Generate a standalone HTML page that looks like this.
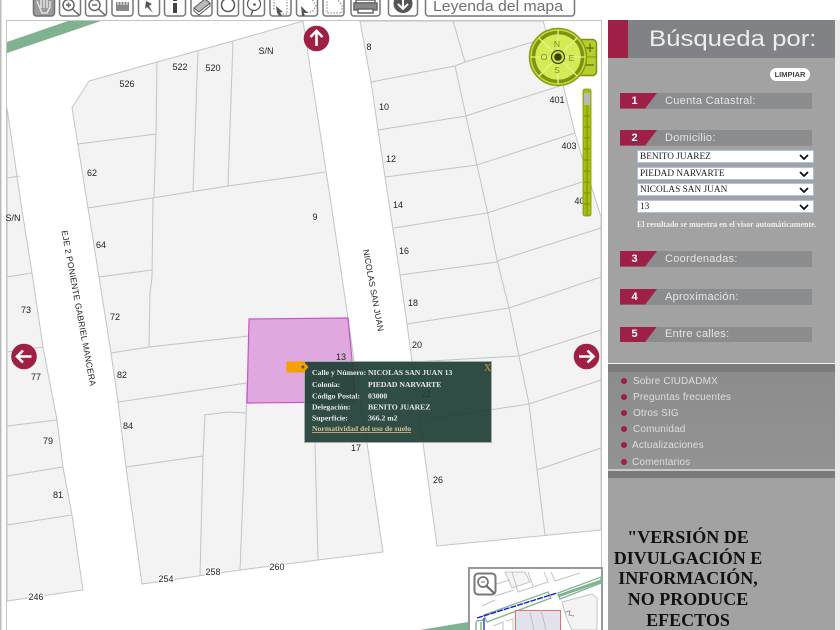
<!DOCTYPE html>
<html lang="es"><head><meta charset="utf-8"><title>Búsqueda por</title>
<style>
html,body{margin:0;padding:0;background:#fff;width:840px;height:630px;overflow:hidden}
#root{position:relative;width:840px;height:630px;overflow:hidden;filter:blur(.3px)}
svg{position:absolute;left:0;top:0}
.l{font:9px "Liberation Sans",sans-serif;fill:#222;text-anchor:middle}
.h{paint-order:stroke;stroke:#fff;stroke-width:2px}
.p{fill:#f3f3f3;stroke:#c4c4c4;stroke-width:1}
.n{fill:none;stroke:#c4c4c4;stroke-width:1}
.pop{font:bold 7.7px "Liberation Serif",serif;fill:#e8e8e8}
.abs{position:absolute}
.bar{position:absolute;left:620px;width:192px;height:15.5px;background:#8a8c8e}
.bar i{position:absolute;left:0;top:0;width:37px;height:100%;background:#9e2047;clip-path:polygon(0 0,100% 0,68% 100%,0 100%)}
.bar b{position:absolute;left:2px;width:25px;top:1.5px;text-align:center;font:bold 11px "Liberation Sans",sans-serif;color:#fff}
.bar span{position:absolute;left:45px;top:1.5px;font:11px "Liberation Sans",sans-serif;letter-spacing:.3px;color:#e6e6e6;white-space:nowrap}
.sel{position:absolute;left:637px;height:11px;background:#fff;border:1px solid #a9c3e6;font:9.3px/12px "Liberation Serif",serif;color:#222;padding-left:2px;box-sizing:content-box;width:173px;white-space:nowrap}
.sel svg{left:161px;top:1.5px}
.lnk{position:absolute;left:633px;font:10px "Liberation Sans",sans-serif;letter-spacing:.15px;color:#dedede;white-space:nowrap}
.dot{position:absolute;left:621px;width:6px;height:6px;border-radius:3px;background:#9e2047}
.ver{position:absolute;left:608px;width:160px;text-align:center;font:bold 18px/20.7px "Liberation Serif",serif;color:#111;top:527px;white-space:nowrap}
.t{fill:#fff;stroke:#777;stroke-width:1.5}
</style></head>
<body><div id="root">
<svg width="840" height="630" viewBox="0 0 840 630">
<rect x="0" y="0" width="1.5" height="630" fill="#bbb"/>
<!-- map -->
<rect x="6.5" y="20.5" width="595" height="610" fill="#fff" stroke="#c4c4c4"/>
<polygon points="7,42 68,21 101,21 7,53" fill="#7fb38f"/>
<polygon points="420,630 468,622 468,630" fill="#7fb38f"/>
<!-- west block -->
<polygon class="p" points="7,108 22,210 32,273 43,347 57,420 63,467 72,515 83,590 7,601"/>
<path class="n" d="M7,178 20,176M7,277 32,273M7,352 43,347M7,426 57,420M7,476 63,467M7,525 72,515"/>
<!-- central block -->
<polygon class="p" points="72,108 89,81 157,62 233,41 303,21 332,210 348,318 354,360 367,443 383,552 318,560 240,570 142,584 126,467 118,402 111,353 99,277 88,208"/>
<path class="n" d="M78,144 156,134M157,62 156,134 154,198M198,51 193,192M233,41 228,186M88,208 152,198 228,186 300,176 325,172M153,198 152,278 150,292 149,347M99,277 152,270M111,353 149,347 249,336M118,402 247,383M126,467 203,456M205,415 203,456 200,575M204,415 228,412 246,413M247,383 246,420 240,570M315,400 315,443 318,560"/>
<!-- east block -->
<polygon class="p" points="360,21 371,82 385,177 390,210 400,275 407,324 412,361 423,443 437,546 601,530 601,217 582,157 575,133 563,85 543,21"/>
<path class="n" d="M453,21 465,62M455,66 466,116 477,165 487,210 497,260 509,308 519,356 529,404 537,470 545,535M371,82 455,66 465,62 533,42M378,130 466,116 490,108 560,86M385,177 477,165 575,133M487,213 582,182M394,228 487,213M497,261 601,228M400,275 497,262M509,308 601,277M407,324 509,308M519,356 601,330M412,362 519,356M529,404 601,380M423,420 529,404M537,470 601,448"/>
<!-- pink parcel -->
<polygon points="249,319 348,318 356,402 247,403" fill="#dfa8de" stroke="#c855c8" stroke-width="1.2"/>
<!-- labels -->
<g>
<text class="l" x="127" y="87">526</text><text class="l" x="180" y="70">522</text><text class="l" x="213" y="71">520</text><text class="l" x="266" y="54">S/N</text>
<text class="l" x="369" y="50">8</text><text class="l" x="384" y="110">10</text><text class="l" x="391" y="162">12</text><text class="l" x="398" y="208">14</text><text class="l" x="404" y="254">16</text><text class="l" x="413" y="306">18</text><text class="l" x="417" y="348">20</text>
<text class="l" x="557" y="103">401</text><text class="l" x="569" y="149">403</text><text class="l" x="582" y="204">403</text>
<text class="l" x="92" y="176">62</text><text class="l" x="101" y="248">64</text><text class="l" x="315" y="220">9</text><text class="l" x="13" y="221">S/N</text>
<text class="l" x="115" y="320">72</text><text class="l" x="26" y="313">73</text><text class="l" x="36" y="380">77</text><text class="l" x="122" y="378">82</text><text class="l" x="128" y="429">84</text>
<text class="l" x="48" y="444">79</text><text class="l" x="58" y="498">81</text>
<text class="l h" x="36" y="600">246</text><text class="l h" x="166" y="582">254</text><text class="l h" x="213" y="575">258</text><text class="l h" x="277" y="570">260</text>
<text class="l" x="341" y="360">13</text><text class="l" x="356" y="451">17</text><text class="l" x="438" y="483">26</text><text class="l" x="426" y="397">22</text>
<text font-family="Liberation Sans" font-size="8.5" fill="#222" transform="translate(61.5,231) rotate(79.5)" textLength="158">EJE 2 PONIENTE GABRIEL MANCERA</text>
<text font-family="Liberation Sans" font-size="8.5" fill="#222" transform="translate(363,250) rotate(79.6)" textLength="83">NICOLAS SAN JUAN</text>
</g>
<!-- arrows -->
<g fill="#a01f45"><circle cx="316.500" cy="38.500" r="12.800"/><circle cx="24" cy="356.500" r="12.800"/><circle cx="586.500" cy="356.500" r="12.800"/></g>
<g fill="none" stroke="#fff" stroke-width="2.600">
<path d="M316.500,46V31M310.500,37 316.500,31 322.500,37"/>
<path d="M31.500,356.500H17M23,350.500 17,356.500 23,362.500"/>
<path d="M579,356.500H593.500M587.500,350.500 593.500,356.500 587.500,362.500"/>
</g>
<!-- compass -->
<rect x="576" y="39.500" width="20.500" height="36" rx="4" fill="#b7ce2c" stroke="#7f9110" stroke-width="1.500"/>
<path d="M578,57H596" stroke="#7f9110"/>
<path d="M590,43.500V52M586,48H594M586,65H594" stroke="#5e6e08" stroke-width="1.300"/>
<circle cx="558" cy="57" r="28.500" fill="#c3da34" stroke="#8a9c14" stroke-width="1.500"/>
<circle cx="558" cy="57" r="24.500" fill="none" stroke="#7f9110" stroke-width="3.500"/>
<circle cx="558" cy="57" r="22.500" fill="#d6ea55"/>
<path d="M558,30V84M531,57H585M539,38 577,76M577,38 539,76" stroke="#e6f28e" stroke-width="1.300"/>
<circle cx="558" cy="57" r="6.500" fill="#cfe24b" stroke="#3d4706" stroke-width="1.200"/>
<circle cx="558" cy="57" r="3.800" fill="#39420a"/>
<g font-family="Liberation Sans" font-size="8.500" fill="#7b8c14" text-anchor="middle"><text x="557" y="47">N</text><text x="544" y="60">O</text><text x="571.500" y="61">E</text><text x="557" y="73">S</text></g>
<!-- slider -->
<rect x="583" y="89" width="8" height="127" rx="2" fill="#a9bf10" stroke="#7f9110" stroke-width=".8"/>
<rect x="584" y="93" width="6" height="12" fill="#b8b8b8"/>
<path d="M587,105V216M584,116H590M584,127H590M584,138H590M584,149H590M584,160H590M584,171H590M584,182H590M584,193H590M584,204H590" stroke="#718206" stroke-width=".8"/>
<!-- toolbar -->
<g>
<rect x="33.500" y="-6" width="21" height="22" rx="3" fill="#9a9a9a" stroke="#6f6f6f" stroke-width="1.500"/>
<rect class="t" x="59.500" y="-6" width="21" height="22" rx="3"/><rect class="t" x="85.500" y="-6" width="21" height="22" rx="3"/><rect class="t" x="112" y="-6" width="21" height="22" rx="3"/><rect class="t" x="138.500" y="-6" width="21" height="22" rx="3"/><rect class="t" x="164.500" y="-6" width="21" height="22" rx="3"/><rect class="t" x="191" y="-6" width="21" height="22" rx="3"/><rect class="t" x="217.500" y="-6" width="21" height="22" rx="3"/><rect class="t" x="243.500" y="-6" width="21" height="22" rx="3"/><rect class="t" x="270" y="-6" width="21" height="22" rx="3"/><rect class="t" x="296.500" y="-6" width="21" height="22" rx="3"/><rect class="t" x="323" y="-6" width="21" height="22" rx="3"/><rect class="t" x="351" y="-6" width="29" height="22" rx="3"/><rect class="t" x="388.500" y="-6" width="29" height="22" rx="3"/><rect class="t" x="425.500" y="-6" width="149" height="22" rx="3"/>
<!-- hand -->
<path d="M39,6 37,1M41,8V-1M44,8V-2M47,8V-1M39,6 42,13H47L50,7V1" fill="none" stroke="#e4e4e4" stroke-width="1.500"/>
<g fill="none" stroke="#666" stroke-width="1.500">
<circle cx="68.500" cy="5" r="5.500"/><path d="M72.500,9 79,15M66,5H71M68.500,2.500V7.500"/>
<circle cx="94.500" cy="5" r="5.500"/><path d="M98.500,9 105,15M92,5H97"/>
</g>
<path d="M116,2H129V11H116Z" fill="#888"/><path d="M118,0V5M121,0V5M124,0V5M127,0V5" stroke="#fff"/>
<path d="M146,1 152,4 149,6 153,13 147,7 145,9Z" fill="#555"/>
<rect x="173" y="-2" width="4" height="3" fill="#444"/><rect x="173" y="3" width="4" height="10" fill="#444"/>
<path d="M194,8 205,-1 210,3 199,12Z" fill="#bbb" stroke="#555"/><path d="M194,8V11L199,15 210,6V3" fill="none" stroke="#555"/>
<circle cx="228" cy="5" r="6.500" fill="none" stroke="#555" stroke-width="1.500"/>
<circle cx="254" cy="4" r="6.500" fill="none" stroke="#555" stroke-width="1.200"/><circle cx="254.500" cy="4.500" r="1.300" fill="#555"/><path d="M253,10 251,15" stroke="#555" stroke-width="1.500"/>
<path d="M274,-1V11M287,-1V14H280" fill="none" stroke="#777" stroke-dasharray="1.500 1.500"/><path d="M276,6 283,12 280,12.500 282,15.500 279,15.500 277,13Z" fill="#555"/>
<path d="M301,-1H312L316,6 312,12H306" fill="none" stroke="#777" stroke-dasharray="1.500 1.500"/><path d="M301,6 308,13 304,13 305,16 302,16Z" fill="#555"/>
<path d="M327,-1H337L342,5V13H327Z" fill="none" stroke="#777" stroke-dasharray="1.500 1.500"/>
<g fill="none" stroke="#666" stroke-width="1.500"><rect x="356" y="0" width="19" height="3"/><rect x="354" y="3" width="23" height="7" fill="#888"/><rect x="358" y="9" width="15" height="4" fill="#fff"/></g>
<circle cx="403" cy="3.500" r="9.500" fill="#555"/><path d="M403,-2V9M398,4 403,9 408,4" fill="none" stroke="#fff" stroke-width="2"/>
<text x="433" y="11" font-family="Liberation Sans" font-size="15" fill="#6f6f6f" textLength="130" lengthAdjust="spacingAndGlyphs">Leyenda del mapa</text>
</g>
<!-- minimap -->
<rect x="469" y="568" width="133" height="63" fill="#fff" stroke="#999" stroke-width="2"/>
<g fill="none">
<path d="M505,572 512,588 530,582 525,572Z" stroke="#c4c4c4" fill="#f4f4f4"/>
<path d="M512,572 518,592 548,582 544,572" stroke="#c4c4c4"/>
<path d="M528,572 533,586M551,572 555,581 580,573M493,585 510,580M495,596 514,590M482,606 495,600" stroke="#c4c4c4"/>
<path d="M562,602 592,594 597,598V630H572Q566,618 562,602Z" fill="#f4f4f4" stroke="#c4c4c4"/>
<path d="M565,612 570,611 569,615 574,616" stroke="#999"/>
<path d="M484,615 548,592 551,598 487,622ZM558,593 601,577V583L560,599Z" fill="#fff" stroke="#83b593" stroke-width="1.300"/>
<path d="M558,596 601,581" stroke="#7fb38f" stroke-width="3"/>
<path d="M476,621 484,620M476,630V622M481,630V622" stroke="#83b593" stroke-width="1.500"/>
<path d="M477,618 557,593" stroke="#1b1bd0" stroke-width="1.400" stroke-dasharray="6 1"/>
<path d="M484,618V630" stroke="#3a3ae0" stroke-width="1.500"/>
<path d="M493,626 503,622V630M506,621 513,619V630" stroke="#c4c4c4"/>
<rect x="515.500" y="610.500" width="45" height="24" fill="#e2e2ec" stroke="#f06a6a"/>
<path d="M530,612 534,630M541,610 546,630" stroke="#c0c0c0"/>
<rect x="474.500" y="573.500" width="21" height="21" rx="3.500" fill="#fff" stroke="#777" stroke-width="2"/>
<circle cx="483" cy="582" r="5" stroke="#666" stroke-width="1.500"/><path d="M486.500,586 494,593" stroke="#666" stroke-width="2"/><path d="M481,582H485" stroke="#666"/>
</g>
<!-- popup -->
<rect x="304.500" y="361.500" width="187" height="81" fill="#1f3f37" fill-opacity=".93" stroke="#a8a8a8"/>
<g class="pop">
<text class="pop" x="312" y="375">Calle y Número:</text><text class="pop" x="368" y="375">NICOLAS SAN JUAN 13</text>
<text class="pop" x="312" y="387">Colonia:</text><text class="pop" x="368" y="387">PIEDAD NARVARTE</text>
<text class="pop" x="312" y="398.500">Código Postal:</text><text class="pop" x="368" y="398.500">03000</text>
<text class="pop" x="312" y="409.500">Delegación:</text><text class="pop" x="368" y="409.500">BENITO JUAREZ</text>
<text class="pop" x="312" y="420.500">Superficie:</text><text class="pop" x="368" y="420.500">366.2 m2</text>
<text class="pop" x="312" y="431" style="fill:#dcc08a;text-decoration:underline">Normatividad del uso de suelo</text>
<text x="484" y="371" font-family="Liberation Serif" font-size="10" font-weight="bold" fill="#b08a3e">X</text>
</g>
<path d="M286.500,361.500H303.500L308.500,367 303.500,372.500H286.500Z" fill="#f5a000"/>
<circle cx="303" cy="367" r="1.500" fill="#4a5a70"/>
</svg>

<!-- panel -->
<div class="abs" style="left:835px;top:20px;width:5px;height:610px;background:#ececec"></div>
<div class="abs" style="left:608px;top:20px;width:227px;height:610px;background:#a2a2a2"></div>
<div class="abs" style="left:608px;top:20px;width:227px;height:38px;background:#808285"></div>
<div class="abs" style="left:608px;top:20px;width:20px;height:38px;background:#9e2047"></div>
<div class="abs" style="left:649px;top:25px;font:22px/28px 'Liberation Sans',sans-serif;color:#eee;white-space:nowrap;transform:scaleX(1.17);transform-origin:0 0">Búsqueda por:</div>
<div class="abs" style="left:770px;top:68px;width:40px;height:13px;border-radius:7px;background:#fff;text-align:center;font:bold 7.500px/13px 'Liberation Sans',sans-serif;color:#444">LIMPIAR</div>

<div class="bar" style="top:93px"><i></i><b>1</b><span>Cuenta Catastral:</span></div>
<div class="bar" style="top:130px"><i></i><b>2</b><span>Domicilio:</span></div>
<div class="sel" style="top:150px">BENITO JUAREZ<svg width="10" height="8"><path d="M1,2 5,6 9,2" fill="none" stroke="#111" stroke-width="1.800"/></svg></div>
<div class="sel" style="top:167px">PIEDAD NARVARTE<svg width="10" height="8"><path d="M1,2 5,6 9,2" fill="none" stroke="#111" stroke-width="1.800"/></svg></div>
<div class="sel" style="top:183px">NICOLAS SAN JUAN<svg width="10" height="8"><path d="M1,2 5,6 9,2" fill="none" stroke="#111" stroke-width="1.800"/></svg></div>
<div class="sel" style="top:200px">13<svg width="10" height="8"><path d="M1,2 5,6 9,2" fill="none" stroke="#111" stroke-width="1.800"/></svg></div>
<div class="abs" style="left:637px;top:220px;font:bold 8px/10px 'Liberation Serif',serif;color:#eee;white-space:nowrap">El resultado se muestra en el visor automáticamente.</div>
<div class="bar" style="top:251px"><i></i><b>3</b><span>Coordenadas:</span></div>
<div class="bar" style="top:289px"><i></i><b>4</b><span>Aproximación:</span></div>
<div class="bar" style="top:326.500px"><i></i><b>5</b><span>Entre calles:</span></div>

<div class="abs" style="left:608px;top:363px;width:227px;height:1px;background:#f4f4f4"></div>
<div class="abs" style="left:608px;top:364px;width:227px;height:105px;background:linear-gradient(#8c8c8c,#929292)"></div>
<div class="abs" style="left:608px;top:364px;width:227px;height:8px;background:#7b7b7b"></div>
<div class="abs" style="left:608px;top:469px;width:227px;height:2px;background:#c8c8c8"></div>
<div class="abs" style="left:608px;top:471px;width:227px;height:7px;background:#7b7b7b"></div>
<div class="dot" style="top:378px"></div><div class="lnk" style="top:376px">Sobre CIUDADMX</div>
<div class="dot" style="top:394px"></div><div class="lnk" style="top:392px">Preguntas frecuentes</div>
<div class="dot" style="top:410px"></div><div class="lnk" style="top:408px">Otros SIG</div>
<div class="dot" style="top:426px"></div><div class="lnk" style="top:424px">Comunidad</div>
<div class="dot" style="top:442px"></div><div class="lnk" style="top:440px;left:632px">Actualizaciones</div>
<div class="dot" style="top:459px"></div><div class="lnk" style="top:457px;left:632px">Comentarios</div>
<div class="ver">"VERSIÓN DE<br>DIVULGACIÓN E<br>INFORMACIÓN,<br>NO PRODUCE<br>EFECTOS</div>
</div></body></html>
